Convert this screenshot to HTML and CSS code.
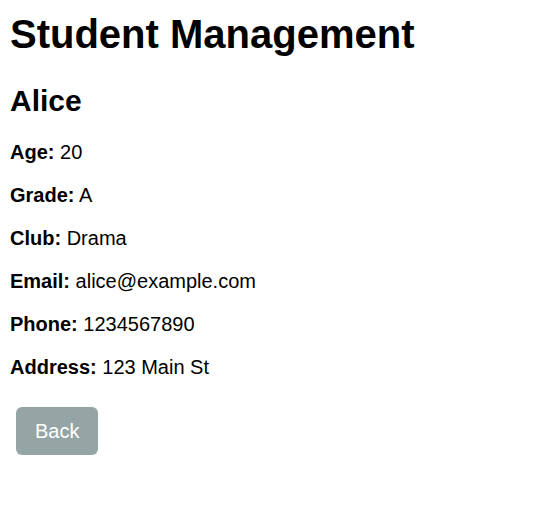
FILE: index.html
```html
<!DOCTYPE html>
<html>
<head>
<meta charset="utf-8">
<title>Student Management</title>
<link rel="stylesheet" href="styles.css">
</head>
<body>
<div class="app">
  <h1 class="title">Student Management</h1>
  <div class="detail">
    <h2 class="name">Alice</h2>
    <p class="field"><strong>Age:</strong> 20</p>
    <p class="field"><strong>Grade:</strong> A</p>
    <p class="field"><strong>Club:</strong> Drama</p>
    <p class="field"><strong>Email:</strong> alice@example.com</p>
    <p class="field"><strong>Phone:</strong> 1234567890</p>
    <p class="field last"><strong>Address:</strong> 123 Main St</p>
    <button class="back">Back</button>
  </div>
</div>
</body>
</html>
```
FILE: styles.css
```css
html, body {
  margin: 0;
  background: #fff;
}
body {
  padding: 12px 10px 8px;
  font-family: "Liberation Sans", Arial, sans-serif;
  color: #000;
}
.app {
  display: block;
}
.title {
  font-size: 40px;
  font-weight: bold;
  margin: 0 0 26.8px;
}
.name {
  font-size: 30px;
  font-weight: bold;
  margin: 24.9px 0 23.5px;
}
.field {
  font-size: 20px;
  margin: 20px 0;
}
.field.last {
  margin-bottom: 21.5px;
}
.back {
  font-family: "Liberation Sans", Arial, sans-serif;
  font-size: 20px;
  color: #fff;
  background: #95a5a6;
  border: none;
  border-radius: 6px;
  padding: 12.5px 18.75px;
  margin: 6.25px;
  line-height: normal;
}
```
